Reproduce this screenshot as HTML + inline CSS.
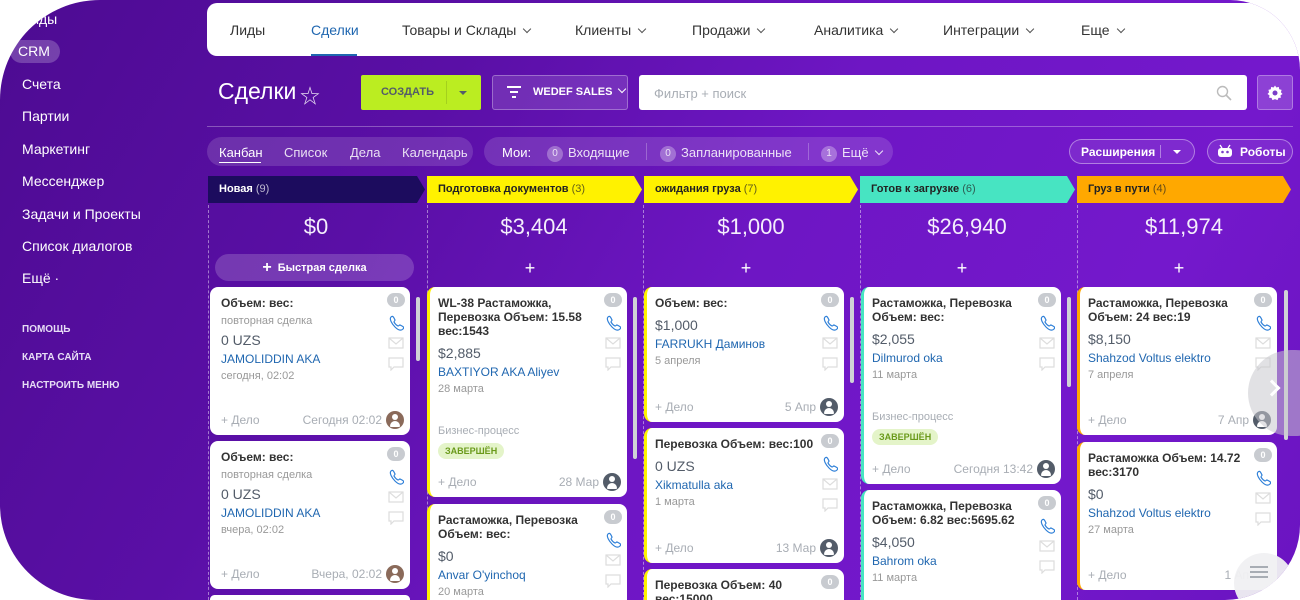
<!DOCTYPE html>
<html><head><meta charset="utf-8">
<style>
*{box-sizing:border-box;margin:0;padding:0}
html,body{overflow:hidden}
body{width:1300px;height:600px;background:#fff;font-family:"Liberation Sans","Noto Sans CJK SC",sans-serif;position:relative}
#bg{position:absolute;left:0;top:0;width:1300px;height:600px;border-radius:100px 70px 75px 95px;background:linear-gradient(120deg,#4d0b92 0%,#5a0fa6 30%,#6e16c4 55%,#7418cc 80%,#6a14c0 100%);overflow:hidden}
.abs{position:absolute}
.side{position:absolute;left:22px;color:#fff;font-size:14px;line-height:18px}
.sm{position:absolute;left:22px;color:#e6dcf5;font-size:10px;font-weight:bold}
.nav{position:absolute;left:207px;top:3px;width:1110px;height:53px;background:#fff;border-radius:10px 0 0 10px}
.nav span{position:absolute;top:19px;font-size:14px;color:#333;white-space:nowrap}
.chev{display:inline-block;width:6px;height:6px;border-right:1.5px solid #555;border-bottom:1.5px solid #555;transform:rotate(45deg);margin-left:8px;position:relative;top:-3px}
.wchev{display:inline-block;width:6px;height:6px;border-right:1.5px solid #fff;border-bottom:1.5px solid #fff;transform:rotate(45deg);margin-left:7px;position:relative;top:-3px}
.hdr{position:absolute;top:176px;height:27px;font-size:11px;font-weight:bold;line-height:27px;padding-left:11px;white-space:nowrap;clip-path:polygon(0 0,calc(100% - 8px) 0,100% 50%,calc(100% - 8px) 100%,0 100%)}
.hdr i{font-style:normal;font-weight:normal;opacity:.7}
.amt{position:absolute;top:214px;width:216px;text-align:center;color:#f4eefc;font-size:22px}
.plus{position:absolute;top:258px;width:216px;text-align:center;color:#fff;font-size:18px;line-height:20px}
.dash{position:absolute;top:205px;height:400px;border-left:1px dashed rgba(255,255,255,.45)}
.card{position:absolute;width:200px;background:#fff;border-radius:8px;border-left:3px solid transparent;padding:9px 30px 0 8px}
.t{font-size:12px;font-weight:bold;color:#333;line-height:14px}
.s{font-size:11px;color:#999;line-height:14px;margin-top:4px}
.m{font-size:14px;color:#535c69;line-height:20px;margin-top:4px}
.l{font-size:12px;color:#2067b0;line-height:18px}
.d{font-size:11px;color:#999;line-height:16px}
.bp{font-size:11px;color:#a8adb4;margin-top:27px;line-height:14px}
.bd{display:inline-block;margin-top:5px;background:#e4f4c9;color:#6a9a1a;font-size:9px;font-weight:bold;padding:3px 7px;border-radius:9px}
.ft{position:absolute;left:8px;right:28px;bottom:8px;font-size:12px;color:#a8adb4;line-height:14px}
.ft b{font-weight:normal;float:right}
.av{position:absolute;right:6px;bottom:6px;width:18px;height:18px;border-radius:50%;background:#535c69;overflow:hidden}
.av:before{content:"";position:absolute;left:6px;top:3px;width:6px;height:6px;border-radius:50%;background:#fff}
.av:after{content:"";position:absolute;left:4px;top:10px;width:10px;height:6px;border-radius:5px 5px 1px 1px;background:#fff}
.ph{background:#8a6a5a}
.ic{position:absolute;right:5px;top:6px;width:18px}
.cnt{width:18px;height:14px;border-radius:7px;background:#c8cbd0;color:#fff;font-size:9px;font-weight:bold;text-align:center;line-height:14px}
.ic svg{display:block;margin:0 auto}
.sb{position:absolute;width:4px;border-radius:2px;background:#d0d2d6}
.pill{position:absolute;background:rgba(255,255,255,.14);border-radius:15px}
.pt{position:absolute;color:#fff;font-size:13px;top:145px;white-space:nowrap}
.bdg{display:inline-block;width:16px;height:16px;border-radius:50%;background:rgba(255,255,255,.35);font-size:10px;text-align:center;line-height:16px;margin-right:5px;vertical-align:1px}
</style></head><body>
<div id="bg">
<div class="side" style="top:10px">Лиды</div>
<div class="abs" style="left:10px;top:40px;width:50px;height:23px;border-radius:12px;background:rgba(255,255,255,.22)"></div>
<div class="side" style="top:42px;left:18px">CRM</div>
<div class="side" style="top:75px">Счета</div>
<div class="side" style="top:107px">Партии</div>
<div class="side" style="top:140px">Маркетинг</div>
<div class="side" style="top:172px">Мессенджер</div>
<div class="side" style="top:205px">Задачи и Проекты</div>
<div class="side" style="top:237px">Список диалогов</div>
<div class="side" style="top:269px">Ещё ·</div>
<div class="sm" style="top:324px">ПОМОЩЬ</div>
<div class="sm" style="top:352px">КАРТА САЙТА</div>
<div class="sm" style="top:380px">НАСТРОИТЬ МЕНЮ</div>

<div class="nav">
<span style="left:23px">Лиды</span>
<span style="left:104px;color:#2067b0">Сделки</span>
<div class="abs" style="left:104px;top:51px;width:46px;height:2px;background:#2067b0"></div>
<span style="left:195px">Товары и Склады<i class="chev"></i></span>
<span style="left:368px">Клиенты<i class="chev"></i></span>
<span style="left:485px">Продажи<i class="chev"></i></span>
<span style="left:607px">Аналитика<i class="chev"></i></span>
<span style="left:736px">Интеграции<i class="chev"></i></span>
<span style="left:874px">Еще<i class="chev"></i></span>
</div>

<div class="abs" style="left:218px;top:78px;color:#fff;font-size:23px">Сделки</div>
<div class="abs" style="left:300px;top:80px;color:#fff;font-size:20px;opacity:.85">☆</div>
<div class="abs" style="left:361px;top:75px;width:120px;height:35px;background:#bbed21;border-radius:2px"></div>
<div class="abs" style="left:381px;top:86px;font-size:11px;font-weight:bold;color:#535c69">СОЗДАТЬ</div>
<div class="abs" style="left:446px;top:81px;width:1px;height:23px;background:rgba(0,0,0,.12)"></div>
<div class="abs" style="left:459px;top:91px;border-left:4px solid transparent;border-right:4px solid transparent;border-top:4px solid #535c69"></div>
<div class="abs" style="left:492px;top:75px;width:136px;height:35px;background:rgba(255,255,255,.13);border:1px solid rgba(255,255,255,.3);border-radius:3px"></div>
<svg class="abs" style="left:506px;top:85px" width="16" height="14"><path d="M1 2H15M4 7H12M6 12H10" stroke="#fff" stroke-width="2"/></svg>
<div class="abs" style="left:533px;top:86px;font-size:11px;font-weight:bold;color:#fff">WEDEF SALES<i class="wchev"></i></div>
<div class="abs" style="left:639px;top:75px;width:608px;height:35px;background:#fff;border-radius:3px"></div>
<div class="abs" style="left:654px;top:86px;font-size:13px;color:#a8adb4">Фильтр + поиск</div>
<svg class="abs" style="left:1216px;top:85px" width="16" height="16"><circle cx="6.5" cy="6.5" r="5" stroke="#bbb" stroke-width="1.4" fill="none"/><path d="M10 10L15 15" stroke="#bbb" stroke-width="1.6"/></svg>
<div class="abs" style="left:1257px;top:75px;width:36px;height:35px;background:rgba(255,255,255,.18);border:1px solid rgba(255,255,255,.3);border-radius:3px"></div>
<svg class="abs" style="left:1267px;top:85px" width="16" height="16" viewBox="0 0 16 16"><path d="M8 0.5l1.4 2 2.4-.6.4 2.4 2.4.6-.7 2.3 1.6 1.8-2 1.4.4 2.4-2.4.1-1 2.2-2.5-1-2.5 1-1-2.2-2.4-.1.4-2.4-2-1.4 1.6-1.8-.7-2.3 2.4-.6.4-2.4 2.4.6z" fill="#fff"/><circle cx="8" cy="8" r="2.5" fill="#7a3fc8"/></svg>
<div class="abs" style="left:207px;top:126px;width:1086px;height:1px;background:rgba(255,255,255,.3)"></div>

<div class="pill" style="left:207px;top:137px;width:266px;height:29px"></div>
<div class="pt" style="left:219px">Канбан</div>
<div class="abs" style="left:219px;top:162px;width:42px;height:1px;background:#fff"></div>
<div class="pt" style="left:284px;opacity:.85">Список</div>
<div class="pt" style="left:350px;opacity:.85">Дела</div>
<div class="pt" style="left:402px;opacity:.85">Календарь</div>
<div class="pill" style="left:484px;top:137px;width:409px;height:29px"></div>
<div class="pt" style="left:502px">Мои:</div>
<div class="pt" style="left:547px;opacity:.85"><span class="bdg">0</span>Входящие</div>
<div class="abs" style="left:646px;top:143px;width:1px;height:17px;background:rgba(255,255,255,.25)"></div>
<div class="pt" style="left:660px;opacity:.85"><span class="bdg">0</span>Запланированные</div>
<div class="abs" style="left:808px;top:143px;width:1px;height:17px;background:rgba(255,255,255,.25)"></div>
<div class="pt" style="left:821px;opacity:.85"><span class="bdg">1</span>Ещё<i class="wchev"></i></div>
<div class="abs" style="left:1069px;top:139px;width:126px;height:25px;border:1px solid rgba(255,255,255,.4);border-radius:13px;background:rgba(255,255,255,.08)"></div>
<div class="abs" style="left:1081px;top:145px;font-size:12px;font-weight:bold;color:#fff">Расширения</div>
<div class="abs" style="left:1160px;top:145px;width:1px;height:13px;background:rgba(255,255,255,.4)"></div>
<div class="abs" style="left:1173px;top:150px;border-left:4px solid transparent;border-right:4px solid transparent;border-top:4px solid #fff"></div>
<div class="abs" style="left:1207px;top:139px;width:86px;height:25px;border:1px solid rgba(255,255,255,.4);border-radius:13px;background:rgba(255,255,255,.08)"></div>
<svg class="abs" style="left:1217px;top:144px" width="16" height="14"><path d="M3 1l2 3M13 1l-2 3" stroke="#fff" stroke-width="1.3"/><rect x="1" y="4" width="14" height="9" rx="3" fill="#fff"/><circle cx="5.5" cy="8" r="1.3" fill="#7a3fc8"/><circle cx="10.5" cy="8" r="1.3" fill="#7a3fc8"/></svg>
<div class="abs" style="left:1240px;top:145px;font-size:12px;font-weight:bold;color:#fff">Роботы</div>

<div class="hdr" style="left:208px;width:217px;background:#1c0c5e;color:#fff">Новая <i>(9)</i></div>
<div class="hdr" style="left:427px;width:215px;background:#fff200;color:#222">Подготовка документов <i>(3)</i></div>
<div class="hdr" style="left:644px;width:214px;background:#fff200;color:#222">ожидания груза <i>(7)</i></div>
<div class="hdr" style="left:860px;width:215px;background:#47e4c2;color:#222">Готов к загрузке <i>(6)</i></div>
<div class="hdr" style="left:1077px;width:214px;background:#ffa800;color:#222">Груз в пути <i>(4)</i></div>
<div class="dash" style="left:208px"></div>
<div class="dash" style="left:427px"></div>
<div class="dash" style="left:643px"></div>
<div class="dash" style="left:860px"></div>
<div class="dash" style="left:1077px"></div>

<div class="amt" style="left:208px">$0</div>
<div class="amt" style="left:426px">$3,404</div>
<div class="amt" style="left:643px">$1,000</div>
<div class="amt" style="left:859px">$26,940</div>
<div class="amt" style="left:1076px">$11,974</div>
<div class="abs" style="left:215px;top:254px;width:199px;height:27px;border-radius:14px;background:rgba(255,255,255,.18);color:#fff;font-size:11px;font-weight:bold;text-align:center;line-height:27px"><span style="font-size:16px;vertical-align:-1px;margin-right:6px">+</span>Быстрая сделка</div>
<div class="plus" style="left:422px">+</div>
<div class="plus" style="left:638px">+</div>
<div class="plus" style="left:854px">+</div>
<div class="plus" style="left:1071px">+</div>

<div class="sb" style="left:416px;top:297px;height:64px"></div>
<div class="sb" style="left:633px;top:297px;height:162px"></div>
<div class="sb" style="left:850px;top:297px;height:86px"></div>
<div class="sb" style="left:1067px;top:297px;height:90px"></div>
<div class="sb" style="left:1284px;top:290px;height:150px"></div>

<div class="card" style="left:210px;top:287px;height:148px">
<div class="t">Объем: вес:</div><div class="s">повторная сделка</div><div class="m" style="margin-top:2px">0 UZS</div><div class="l">JAMOLIDDIN AKA</div><div class="d">сегодня, 02:02</div>
<div class="ft">+ Дело<b>Сегодня 02:02</b></div><div class="av ph"></div>
<div class="ic"><div class="cnt">0</div><svg width="16" height="16" style="margin-top:8px"><path d="M3 2c1-1 2-1 3 1l1 2c0 1-1 1-1 2 1 2 2 3 4 4 1 0 1-1 2-1l2 1c2 1 2 2 1 3-2 2-5 1-8-2S1 4 3 2z" fill="none" stroke="#2f80d8" stroke-width="1.2"/></svg><svg width="16" height="12" style="margin-top:6px"><rect x="1" y="1" width="14" height="10" fill="none" stroke="#ddd" stroke-width="1.2"/><path d="M1 1l7 6 7-6" fill="none" stroke="#ddd" stroke-width="1.2"/></svg><svg width="16" height="14" style="margin-top:8px"><path d="M1 1h14v9H6l-3 3v-3H1z" fill="none" stroke="#ddd" stroke-width="1.2"/></svg></div>
</div>
<div class="card" style="left:210px;top:441px;height:148px">
<div class="t">Объем: вес:</div><div class="s">повторная сделка</div><div class="m" style="margin-top:2px">0 UZS</div><div class="l">JAMOLIDDIN AKA</div><div class="d">вчера, 02:02</div>
<div class="ft">+ Дело<b>Вчера, 02:02</b></div><div class="av ph"></div>
<div class="ic"><div class="cnt">0</div><svg width="16" height="16" style="margin-top:8px"><path d="M3 2c1-1 2-1 3 1l1 2c0 1-1 1-1 2 1 2 2 3 4 4 1 0 1-1 2-1l2 1c2 1 2 2 1 3-2 2-5 1-8-2S1 4 3 2z" fill="none" stroke="#2f80d8" stroke-width="1.2"/></svg><svg width="16" height="12" style="margin-top:6px"><rect x="1" y="1" width="14" height="10" fill="none" stroke="#ddd" stroke-width="1.2"/><path d="M1 1l7 6 7-6" fill="none" stroke="#ddd" stroke-width="1.2"/></svg><svg width="16" height="14" style="margin-top:8px"><path d="M1 1h14v9H6l-3 3v-3H1z" fill="none" stroke="#ddd" stroke-width="1.2"/></svg></div>
</div>
<div class="card" style="left:210px;top:595px;height:5px"></div>

<div class="card" style="left:427px;top:287px;height:210px;border-left-color:#fff200">
<div class="t">WL-38 Растаможка, Перевозка Объем: 15.58 вес:1543</div><div class="m" style="margin-top:5px">$2,885</div><div class="l">BAXTIYOR AKA Aliyev</div><div class="d">28 марта</div>
<div class="bp">Бизнес-процесс</div><div class="bd">ЗАВЕРШЁН</div>
<div class="ft">+ Дело<b>28 Мар</b></div><div class="av"></div>
<div class="ic"><div class="cnt">0</div><svg width="16" height="16" style="margin-top:8px"><path d="M3 2c1-1 2-1 3 1l1 2c0 1-1 1-1 2 1 2 2 3 4 4 1 0 1-1 2-1l2 1c2 1 2 2 1 3-2 2-5 1-8-2S1 4 3 2z" fill="none" stroke="#2f80d8" stroke-width="1.2"/></svg><svg width="16" height="12" style="margin-top:6px"><rect x="1" y="1" width="14" height="10" fill="none" stroke="#ddd" stroke-width="1.2"/><path d="M1 1l7 6 7-6" fill="none" stroke="#ddd" stroke-width="1.2"/></svg><svg width="16" height="14" style="margin-top:8px"><path d="M1 1h14v9H6l-3 3v-3H1z" fill="none" stroke="#ddd" stroke-width="1.2"/></svg></div>
</div>
<div class="card" style="left:427px;top:504px;height:96px;border-radius:8px 8px 0 0;border-left-color:#fff200">
<div class="t">Растаможка, Перевозка Объем: вес:</div><div class="m" style="margin-top:5px">$0</div><div class="l">Anvar O'yinchoq</div><div class="d">20 марта</div>
<div class="ic"><div class="cnt">0</div><svg width="16" height="16" style="margin-top:8px"><path d="M3 2c1-1 2-1 3 1l1 2c0 1-1 1-1 2 1 2 2 3 4 4 1 0 1-1 2-1l2 1c2 1 2 2 1 3-2 2-5 1-8-2S1 4 3 2z" fill="none" stroke="#2f80d8" stroke-width="1.2"/></svg><svg width="16" height="12" style="margin-top:6px"><rect x="1" y="1" width="14" height="10" fill="none" stroke="#ddd" stroke-width="1.2"/><path d="M1 1l7 6 7-6" fill="none" stroke="#ddd" stroke-width="1.2"/></svg><svg width="16" height="14" style="margin-top:8px"><path d="M1 1h14v9H6l-3 3v-3H1z" fill="none" stroke="#ddd" stroke-width="1.2"/></svg></div>
</div>

<div class="card" style="left:644px;top:287px;height:135px;border-left-color:#fff200">
<div class="t">Объем: вес:</div><div class="m" style="margin-top:5px">$1,000</div><div class="l">FARRUKH Даминов</div><div class="d">5 апреля</div>
<div class="ft">+ Дело<b>5 Апр</b></div><div class="av"></div>
<div class="ic"><div class="cnt">0</div><svg width="16" height="16" style="margin-top:8px"><path d="M3 2c1-1 2-1 3 1l1 2c0 1-1 1-1 2 1 2 2 3 4 4 1 0 1-1 2-1l2 1c2 1 2 2 1 3-2 2-5 1-8-2S1 4 3 2z" fill="none" stroke="#2f80d8" stroke-width="1.2"/></svg><svg width="16" height="12" style="margin-top:6px"><rect x="1" y="1" width="14" height="10" fill="none" stroke="#ddd" stroke-width="1.2"/><path d="M1 1l7 6 7-6" fill="none" stroke="#ddd" stroke-width="1.2"/></svg><svg width="16" height="14" style="margin-top:8px"><path d="M1 1h14v9H6l-3 3v-3H1z" fill="none" stroke="#ddd" stroke-width="1.2"/></svg></div>
</div>
<div class="card" style="left:644px;top:428px;height:135px;border-left-color:#fff200">
<div class="t">Перевозка Объем: вес:100</div><div class="m" style="margin-top:5px">0 UZS</div><div class="l">Xikmatulla aka</div><div class="d">1 марта</div>
<div class="ft">+ Дело<b>13 Мар</b></div><div class="av"></div>
<div class="ic"><div class="cnt">0</div><svg width="16" height="16" style="margin-top:8px"><path d="M3 2c1-1 2-1 3 1l1 2c0 1-1 1-1 2 1 2 2 3 4 4 1 0 1-1 2-1l2 1c2 1 2 2 1 3-2 2-5 1-8-2S1 4 3 2z" fill="none" stroke="#2f80d8" stroke-width="1.2"/></svg><svg width="16" height="12" style="margin-top:6px"><rect x="1" y="1" width="14" height="10" fill="none" stroke="#ddd" stroke-width="1.2"/><path d="M1 1l7 6 7-6" fill="none" stroke="#ddd" stroke-width="1.2"/></svg><svg width="16" height="14" style="margin-top:8px"><path d="M1 1h14v9H6l-3 3v-3H1z" fill="none" stroke="#ddd" stroke-width="1.2"/></svg></div>
</div>
<div class="card" style="left:644px;top:569px;height:31px;border-radius:8px 8px 0 0;border-left-color:#fff200">
<div class="t">Перевозка Объем: 40 вес:15000</div>
<div class="ic"><div class="cnt">0</div></div>
</div>

<div class="card" style="left:861px;top:287px;height:197px;border-left-color:#47e4c2">
<div class="t">Растаможка, Перевозка Объем: вес:</div><div class="m" style="margin-top:5px">$2,055</div><div class="l">Dilmurod oka</div><div class="d">11 марта</div>
<div class="bp">Бизнес-процесс</div><div class="bd">ЗАВЕРШЁН</div>
<div class="ft">+ Дело<b>Сегодня 13:42</b></div><div class="av"></div>
<div class="ic"><div class="cnt">0</div><svg width="16" height="16" style="margin-top:8px"><path d="M3 2c1-1 2-1 3 1l1 2c0 1-1 1-1 2 1 2 2 3 4 4 1 0 1-1 2-1l2 1c2 1 2 2 1 3-2 2-5 1-8-2S1 4 3 2z" fill="none" stroke="#2f80d8" stroke-width="1.2"/></svg><svg width="16" height="12" style="margin-top:6px"><rect x="1" y="1" width="14" height="10" fill="none" stroke="#ddd" stroke-width="1.2"/><path d="M1 1l7 6 7-6" fill="none" stroke="#ddd" stroke-width="1.2"/></svg><svg width="16" height="14" style="margin-top:8px"><path d="M1 1h14v9H6l-3 3v-3H1z" fill="none" stroke="#ddd" stroke-width="1.2"/></svg></div>
</div>
<div class="card" style="left:861px;top:490px;height:110px;border-radius:8px 8px 0 0;border-left-color:#47e4c2">
<div class="t">Растаможка, Перевозка Объем: 6.82 вес:5695.62</div><div class="m" style="margin-top:5px">$4,050</div><div class="l">Bahrom oka</div><div class="d">11 марта</div>
<div class="ic"><div class="cnt">0</div><svg width="16" height="16" style="margin-top:8px"><path d="M3 2c1-1 2-1 3 1l1 2c0 1-1 1-1 2 1 2 2 3 4 4 1 0 1-1 2-1l2 1c2 1 2 2 1 3-2 2-5 1-8-2S1 4 3 2z" fill="none" stroke="#2f80d8" stroke-width="1.2"/></svg><svg width="16" height="12" style="margin-top:6px"><rect x="1" y="1" width="14" height="10" fill="none" stroke="#ddd" stroke-width="1.2"/><path d="M1 1l7 6 7-6" fill="none" stroke="#ddd" stroke-width="1.2"/></svg><svg width="16" height="14" style="margin-top:8px"><path d="M1 1h14v9H6l-3 3v-3H1z" fill="none" stroke="#ddd" stroke-width="1.2"/></svg></div>
</div>

<div class="card" style="left:1077px;top:287px;height:148px;border-left-color:#ffa800">
<div class="t">Растаможка, Перевозка Объем: 24 вес:19</div><div class="m" style="margin-top:5px">$8,150</div><div class="l">Shahzod Voltus elektro</div><div class="d">7 апреля</div>
<div class="ft">+ Дело<b>7 Апр</b></div><div class="av"></div>
<div class="ic"><div class="cnt">0</div><svg width="16" height="16" style="margin-top:8px"><path d="M3 2c1-1 2-1 3 1l1 2c0 1-1 1-1 2 1 2 2 3 4 4 1 0 1-1 2-1l2 1c2 1 2 2 1 3-2 2-5 1-8-2S1 4 3 2z" fill="none" stroke="#2f80d8" stroke-width="1.2"/></svg><svg width="16" height="12" style="margin-top:6px"><rect x="1" y="1" width="14" height="10" fill="none" stroke="#ddd" stroke-width="1.2"/><path d="M1 1l7 6 7-6" fill="none" stroke="#ddd" stroke-width="1.2"/></svg><svg width="16" height="14" style="margin-top:8px"><path d="M1 1h14v9H6l-3 3v-3H1z" fill="none" stroke="#ddd" stroke-width="1.2"/></svg></div>
</div>
<div class="card" style="left:1077px;top:442px;height:148px;border-left-color:#ffa800">
<div class="t">Растаможка Объем: 14.72 вес:3170</div><div class="m" style="margin-top:5px">$0</div><div class="l">Shahzod Voltus elektro</div><div class="d">27 марта</div>
<div class="ft">+ Дело<b>1 Ап</b></div>
<div class="ic"><div class="cnt">0</div><svg width="16" height="16" style="margin-top:8px"><path d="M3 2c1-1 2-1 3 1l1 2c0 1-1 1-1 2 1 2 2 3 4 4 1 0 1-1 2-1l2 1c2 1 2 2 1 3-2 2-5 1-8-2S1 4 3 2z" fill="none" stroke="#2f80d8" stroke-width="1.2"/></svg><svg width="16" height="12" style="margin-top:6px"><rect x="1" y="1" width="14" height="10" fill="none" stroke="#ddd" stroke-width="1.2"/><path d="M1 1l7 6 7-6" fill="none" stroke="#ddd" stroke-width="1.2"/></svg><svg width="16" height="14" style="margin-top:8px"><path d="M1 1h14v9H6l-3 3v-3H1z" fill="none" stroke="#ddd" stroke-width="1.2"/></svg></div>
</div>

<div class="abs" style="left:1248px;top:350px;width:90px;height:86px;border-radius:43px;background:rgba(200,200,205,.55)"></div>
<div class="abs" style="left:1266px;top:382px;width:12px;height:12px;border-right:3px solid #fff;border-top:3px solid #fff;transform:rotate(45deg)"></div>
<div class="abs" style="left:1234px;top:553px;width:60px;height:60px;border-radius:30px;background:rgba(240,240,242,.95)"></div>
<svg class="abs" style="left:1250px;top:566px" width="18" height="12"><path d="M0 1H18M0 6H18M0 11H18" stroke="#a8adb4" stroke-width="2"/></svg>
</div>
</body></html>
